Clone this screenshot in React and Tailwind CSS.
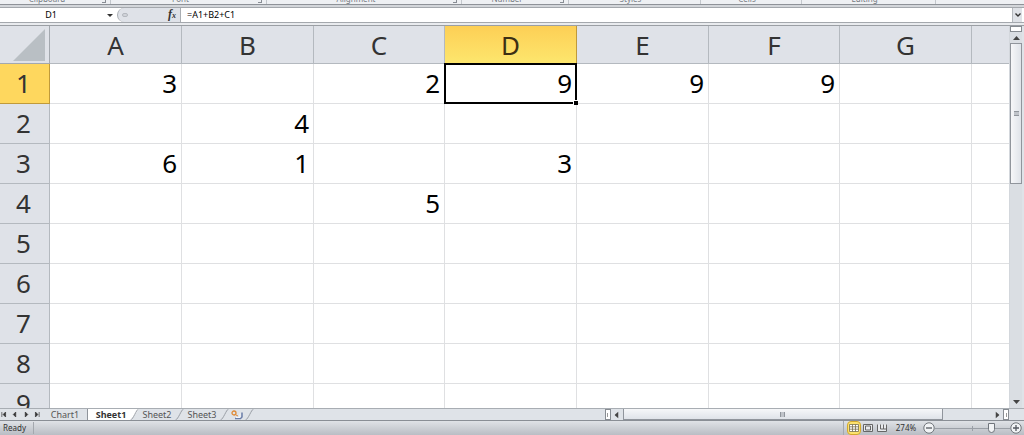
import React, { useState } from "react";

const ribbonGroups = [
  { label: "Clipboard", launcher: true },
  { label: "Font", launcher: true },
  { label: "Alignment", launcher: true },
  { label: "Number", launcher: true },
  { label: "Styles" },
  { label: "Cells" },
  { label: "Editing" },
];

const columns = [
  { name: "A", width: 132 },
  { name: "B", width: 132 },
  { name: "C", width: 131 },
  { name: "D", width: 132 },
  { name: "E", width: 132 },
  { name: "F", width: 131 },
  { name: "G", width: 132 },
  { name: "" },
];

const rows = [1, 2, 3, 4, 5, 6, 7, 8, 9];

const cells = {
  A1: 3,
  C1: 2,
  D1: 9,
  E1: 9,
  F1: 9,
  B2: 4,
  A3: 6,
  B3: 1,
  D3: 3,
  C4: 5,
};

const sheets = ["Chart1", "Sheet1", "Sheet2", "Sheet3"];

export default function App() {
  const [formula, setFormula] = useState("=A1+B2+C1");
  const [sheet, setSheet] = useState("Sheet1");
  const [zoom, setZoom] = useState(274);

  return (
    <div className="flex h-screen flex-col overflow-hidden bg-[#dfe3e8] font-['Noto_Sans',sans-serif] text-[#333]">
      <Ribbon />
      <FormulaBar formula={formula} onChange={setFormula} />
      <div className="flex min-h-0 flex-1 border-t border-[#9b9fa4]">
        <Grid />
        <VerticalScroll />
      </div>
      <SheetBar sheet={sheet} onSelect={setSheet} />
      <StatusBar zoom={zoom} onZoom={setZoom} />
    </div>
  );
}

function Ribbon() {
  return (
    <div className="shrink-0 border-b border-[#8e9298] bg-[#eef0f3]">
      <div className="grid h-1 grid-cols-[111fr_156fr_195fr_107fr_132fr_101fr_134fr_88fr]">
        {ribbonGroups.map((group) => (
          <div key={group.label} className="flex h-1 items-end overflow-hidden border-r border-[#c3c7cc]">
            <span className="flex-1 pr-2 pb-px text-center text-[8px] leading-2 text-[#777c84]">{group.label}</span>
            {group.launcher ? (
              <span className="mr-1 mb-px h-1 w-1 border-r border-b border-[#888d94]" />
            ) : null}
          </div>
        ))}
      </div>
    </div>
  );
}

function FormulaBar({ formula, onChange }) {
  return (
    <div className="shrink-0 border-b-2 border-[#e9ebee] bg-[#d3d6da] pt-0.5">
      <div className="flex h-4 border-y border-[#a4a8ad] bg-white text-[9px]">
        <div className="flex w-[117px] items-center">
          <input
            aria-label="Name box"
            defaultValue="D1"
            className="w-[102px] text-center leading-3 text-black outline-none"
          />
          <button type="button" aria-label="Open name list" className="flex h-3 w-4 items-center justify-center">
            <Arrow className="h-[3px] w-[6px] text-[#333]" />
          </button>
        </div>
        <div className="flex w-16 items-center justify-between rounded-l-full border-r border-l border-[#a9adb2] bg-[#dfe2e8] pr-1 pl-1">
          <span className="h-1 w-1.5 rounded-full border border-[#b4b8bf] bg-[#d0d3d9]" />
          <button
            type="button"
            aria-label="Insert function"
            className="font-['Liberation_Serif',serif] text-[12px] leading-3 font-bold text-[#333] italic"
          >
            f<span className="text-[8px]">x</span>
          </button>
        </div>
        <input
          aria-label="Formula"
          value={formula}
          onChange={(e) => onChange(e.target.value)}
          className="min-w-0 flex-1 pl-1.5 leading-3 text-black outline-none"
        />
        <button
          type="button"
          aria-label="Expand formula bar"
          className="mr-0.5 flex w-2.5 items-center justify-center border-l border-[#b5b9be] bg-[#dfe2e7]"
        >
          <svg viewBox="0 0 6 4" className="h-1 w-1.5" fill="none" stroke="#333" strokeWidth="1.4">
            <path d="M0.5 0.5 3 3 5.5 0.5" />
          </svg>
        </button>
      </div>
    </div>
  );
}

function Grid() {
  return (
    <div className="min-w-0 flex-1 overflow-hidden bg-white">
      <table className="w-full table-fixed border-separate border-spacing-0 text-[26px] leading-8">
        <colgroup>
          <col className="w-[50px]" />
          {columns.map((column) => (
            <col key={column.name} style={{ width: column.width }} />
          ))}
        </colgroup>
        <thead>
          <tr className="h-[38px]">
            <th className="border-r border-b border-[#a3a8ae] bg-[#dfe2e8] p-0 pr-1 pb-0.5 align-bottom">
              <svg viewBox="0 0 32 32" className="ml-auto h-8 w-8">
                <path d="M32 0V32H0Z" fill="#b9bfc4" />
              </svg>
            </th>
            {columns.map((column) => (
              <th
                key={column.name}
                className={`border-r border-b p-0 pt-px font-normal ${
                  column.name === "D"
                    ? "border-[#c09a3a] bg-linear-to-b from-[#fdcf55] to-[#fde66d] text-[#3d2f14]"
                    : "border-[#b4b9bf] bg-[#dfe2e8] last:border-r-0"
                }`}
              >
                {column.name}
              </th>
            ))}
          </tr>
        </thead>
        <tbody>
          {rows.map((row) => (
            <tr key={row} className="h-10">
              <th
                className={`border-r border-b p-0 pr-0.5 pb-0.5 font-normal ${
                  row === 1 ? "border-[#c09a3a] bg-[#fed75e]" : "border-[#b4b9bf] bg-[#dfe2e8]"
                }`}
              >
                {row}
              </th>
              {columns.map((column) => {
                const id = column.name + row;
                return (
                  <td
                    key={id}
                    className="relative border-r border-b border-[#dfe0e2] p-0 pr-1 pb-0.5 text-right text-black last:border-r-0"
                  >
                    {cells[id]}
                    {id === "D1" ? <Selection /> : null}
                  </td>
                );
              })}
            </tr>
          ))}
        </tbody>
      </table>
    </div>
  );
}

// Thick frame and fill handle around the active cell
function Selection() {
  return (
    <span className="pointer-events-none absolute -inset-px z-10 border-2 border-black">
      <span className="absolute -right-[3px] -bottom-[3px] h-[5px] w-[5px] border-t border-l border-white bg-black" />
    </span>
  );
}

function VerticalScroll() {
  return (
    <div className="mr-0.5 flex w-[13px] shrink-0 flex-col items-center border-l border-[#d3d7dc] bg-[#dadee3]">
      <span className="h-1.5 w-3 shrink-0 border border-[#878c92] bg-white" />
      <button type="button" aria-label="Scroll up" className="flex h-[11px] w-3 items-center justify-center">
        <Arrow className="h-1 w-[7px] rotate-180 text-[#444]" />
      </button>
      <div className="flex w-full min-h-0 flex-1 flex-col">
        <div className="flex h-2/5 items-center justify-center border border-[#90959c] bg-linear-to-r from-[#f6f7f9] to-[#dfe3e9]">
          <span className="h-[5px] w-[5px] border-y border-[#90959c] bg-[#bfc3c9]" />
        </div>
      </div>
      <button type="button" aria-label="Scroll down" className="flex h-3 w-3 items-center justify-center">
        <Arrow className="h-1 w-[7px] text-[#444]" />
      </button>
    </div>
  );
}

function SheetBar({ sheet, onSelect }) {
  return (
    <div className="flex h-[13px] shrink-0 border-t border-b border-t-[#a8adb3] border-b-[#898e95] bg-[#dfe3e8] text-[9px] leading-[11px] text-[#555]">
      <div className="flex w-[41px] items-center justify-between">
        <NavButton label="First sheet" d="M1.5 0V6M6 0 3 3 6 6Z" />
        <NavButton label="Previous sheet" d="M5 0 2 3 5 6Z" />
        <NavButton label="Next sheet" d="M2 0 5 3 2 6Z" />
        <NavButton label="Last sheet" d="M5.5 0V6M1 0 4 3 1 6Z" />
      </div>
      <div className="ml-1.5 flex">
        {sheets.map((name) => (
          <React.Fragment key={name}>
            <button
              type="button"
              onClick={() => onSelect(name)}
              className={
                sheet === name
                  ? "w-[42px] bg-white pl-1 text-center font-bold text-[#333]"
                  : "w-9 text-center"
              }
            >
              {name}
            </button>
            {name === "Chart1" ? (
              <span className="ml-1 w-px bg-[#8f949b]" />
            ) : (
              <TabEdge active={sheet === name} />
            )}
          </React.Fragment>
        ))}
        <button type="button" aria-label="Insert sheet" className="flex w-4 items-center justify-center">
          <svg viewBox="0 0 12 10" className="h-2.5 w-3" fill="none">
            <path d="M4 8.5H9.5L11 7V2.5" stroke="#6a7da8" strokeWidth="1.5" />
            <path d="M5 7.5H9V3.5" stroke="#f4f6fa" />
            <circle cx="3" cy="3" r="2" stroke="#e08a35" strokeWidth="1.3" />
            <path d="M5 5 7 6" stroke="#e08a35" />
          </svg>
        </button>
        <TabEdge />
      </div>
      <div className="flex-1" />
      <div className="flex w-[39.5%] items-center">
        <span className="flex h-[11px] w-1.5 items-center justify-center border border-[#878c92] bg-white">
          <span className="h-1 w-px bg-[#999]" />
        </span>
        <button type="button" aria-label="Scroll left" className="flex w-3 items-center justify-center">
          <Arrow className="h-1 w-[7px] rotate-90 text-[#444]" />
        </button>
        <div className="flex h-full flex-1">
          <div className="flex w-[87%] items-center justify-center border border-t-0 border-[#90959c] bg-linear-to-b from-[#f6f7f9] to-[#dfe3e9]">
            <span className="h-[5px] w-[5px] border-x border-[#90959c] bg-[#bfc3c9]" />
          </div>
        </div>
        <button type="button" aria-label="Scroll right" className="flex w-3 items-center justify-center">
          <Arrow className="h-1 w-[7px] -rotate-90 text-[#444]" />
        </button>
        <span className="flex h-[11px] w-1.5 items-center justify-center border border-[#878c92] bg-white">
          <span className="h-1 w-px bg-[#999]" />
        </span>
      </div>
      <div className="w-[15px]" />
    </div>
  );
}

function StatusBar({ zoom, onZoom }) {
  return (
    <div className="flex h-3.5 shrink-0 items-center bg-linear-to-b from-[#dfe2e6] to-[#b9bdc4] pr-0.5 text-[8px] leading-3">
      <span className="w-[34px] border-r border-[#a4a8ae] pl-[3px]">Ready</span>
      <span className="flex-1" />
      <div className="flex h-full items-center border-l border-[#a4a8ae] pl-[3px]">
        <button
          type="button"
          aria-label="Normal view"
          className="flex h-3.5 w-3.5 items-center justify-center rounded-sm border border-[#d3a92c] bg-[#fde36f]"
        >
          <svg viewBox="0 0 10 8" className="h-2 w-2.5" fill="#fff" stroke="#77704e">
            <path d="M0.5 0.5H9.5V7.5H0.5ZM0.5 2.8H9.5M0.5 5.2H9.5M3.5 0.5V7.5M6.5 0.5V7.5" strokeWidth="0.8" />
          </svg>
        </button>
        <button type="button" aria-label="Page layout view" className="flex w-3.5 justify-center">
          <svg viewBox="0 0 10 8" className="h-2 w-2.5" fill="#e9ebee" stroke="#666">
            <path d="M0.5 0.5H9.5V7.5H0.5Z" />
            <path d="M2.5 2H7.5V6H2.5Z" />
          </svg>
        </button>
        <button type="button" aria-label="Page break preview" className="flex w-3.5 justify-center">
          <svg viewBox="0 0 10 8" className="h-2 w-2.5" fill="#e9ebee" stroke="#666">
            <path d="M0.5 0.5V7.5H9.5V0.5M3.5 0.5V5H6.5V0.5M6.5 5H9.5" />
          </svg>
        </button>
      </div>
      <span className="w-[34px] text-center">{zoom}%</span>
      <ZoomButton label="Zoom out" d="M3 6H9" onClick={() => onZoom(Math.max(10, zoom - 10))} />
      <input
        type="range"
        aria-label="Zoom"
        min="10"
        max="350"
        value={zoom}
        onChange={(e) => onZoom(Number(e.target.value))}
        className="h-2.5 w-[75px] appearance-none bg-[linear-gradient(#9a9fa6,#9a9fa6),linear-gradient(#9a9fa6,#9a9fa6)] bg-[length:100%_1px,1px_5px] bg-center bg-no-repeat [&::-webkit-slider-thumb]:h-2.5 [&::-webkit-slider-thumb]:w-[7px] [&::-webkit-slider-thumb]:appearance-none [&::-webkit-slider-thumb]:rounded-b-full [&::-webkit-slider-thumb]:border [&::-webkit-slider-thumb]:border-[#70757c] [&::-webkit-slider-thumb]:bg-[#f1f3f5]"
      />
      <ZoomButton label="Zoom in" d="M3 6H9M6 3V9" onClick={() => onZoom(Math.min(350, zoom + 10))} />
    </div>
  );
}

function ZoomButton({ label, d, onClick }) {
  return (
    <button type="button" aria-label={label} onClick={onClick}>
      <svg viewBox="0 0 12 12" className="h-3 w-3" fill="#f1f3f5" stroke="#555a61">
        <circle cx="6" cy="6" r="5.2" strokeWidth="0.8" />
        <path d={d} strokeWidth="1.3" />
      </svg>
    </button>
  );
}

function NavButton({ label, d }) {
  return (
    <button type="button" aria-label={label}>
      <svg viewBox="0 0 7 6" className="h-[5px] w-[7px]" fill="#333" stroke="#333" strokeWidth="0.8">
        <path d={d} />
      </svg>
    </button>
  );
}

function TabEdge({ active }) {
  return (
    <svg viewBox="0 0 9 11" className="h-[11px] w-[9px]">
      {active ? <path d="M0 0H9L1 11H0Z" fill="#fff" /> : null}
      <path d="M8.5 0C6 1 3.5 10 0.5 11" fill="none" stroke="#9a9fa6" />
    </svg>
  );
}

function Arrow({ className }) {
  return (
    <svg viewBox="0 0 8 4" className={className} fill="currentColor" preserveAspectRatio="none">
      <path d="M0 0H8L4 4Z" />
    </svg>
  );
}
